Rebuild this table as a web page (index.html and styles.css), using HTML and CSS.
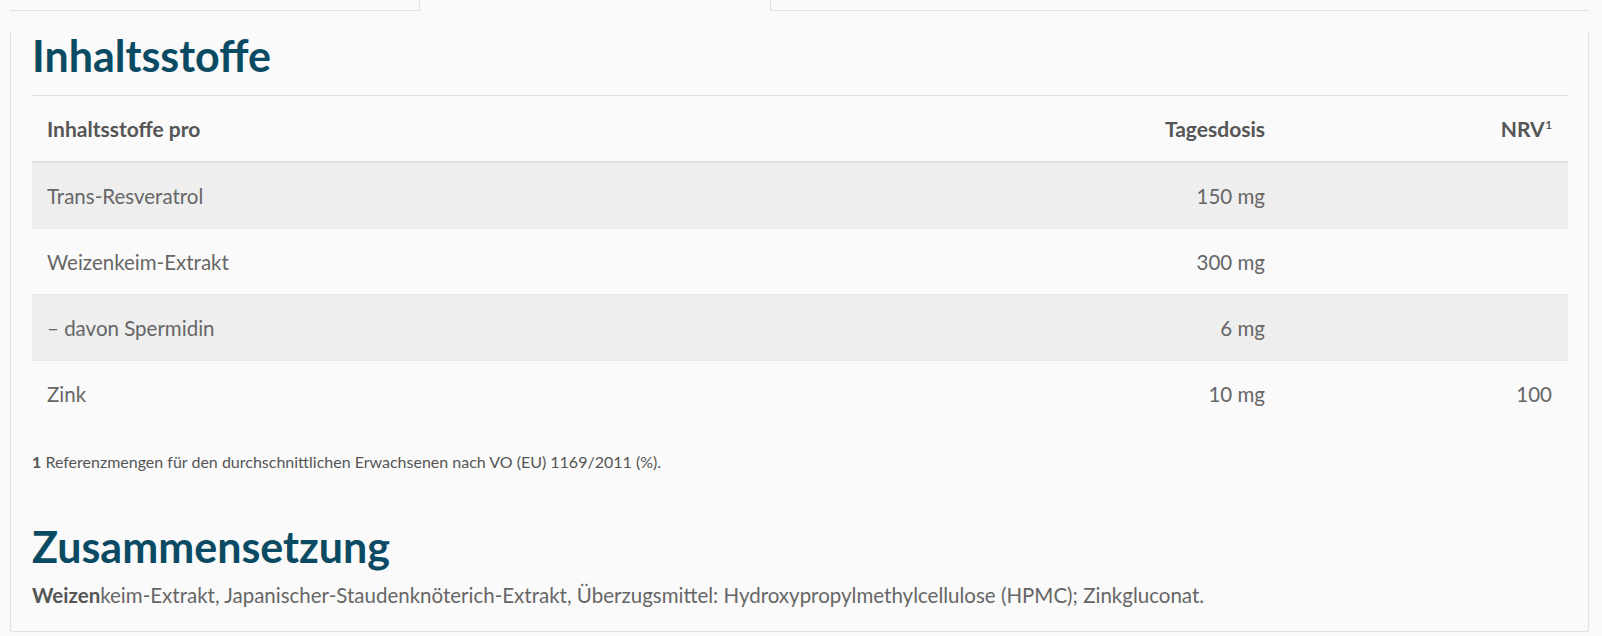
FILE: index.html
```html
<!DOCTYPE html>
<html lang="de">
<head>
<meta charset="utf-8">
<title>Inhaltsstoffe</title>
<link rel="stylesheet" href="styles.css">
</head>
<body>
<div class="wrap">
  <div class="tabs">
    <div class="tab tab-first"></div>
    <div class="tab tab-active"></div>
    <div class="tab tab-last"></div>
  </div>
  <div class="panel">
    <h2 class="title">Inhaltsstoffe</h2>
    <table class="nutri">
      <colgroup>
        <col class="c1">
        <col class="c2">
        <col class="c3">
      </colgroup>
      <thead>
        <tr>
          <th class="left">Inhaltsstoffe pro</th>
          <th class="right">Tagesdosis</th>
          <th class="right">NRV<sup>1</sup></th>
        </tr>
      </thead>
      <tbody>
        <tr class="odd">
          <td class="left">Trans-Resveratrol</td>
          <td class="right">150 mg</td>
          <td class="right"></td>
        </tr>
        <tr>
          <td class="left">Weizenkeim-Extrakt</td>
          <td class="right">300 mg</td>
          <td class="right"></td>
        </tr>
        <tr class="odd">
          <td class="left">– davon Spermidin</td>
          <td class="right">6 mg</td>
          <td class="right"></td>
        </tr>
        <tr>
          <td class="left">Zink</td>
          <td class="right">10 mg</td>
          <td class="right">100</td>
        </tr>
      </tbody>
    </table>
    <p class="footnote"><strong>1</strong> Referenzmengen für den durchschnittlichen Erwachsenen nach VO (EU) 1169/2011 (%).</p>
    <h2 class="title title-2">Zusammensetzung</h2>
    <p class="composition"><strong>Weizen</strong>keim-Extrakt, Japanischer-Staudenknöterich-Extrakt, Überzugsmittel: Hydroxypropylmethylcellulose (HPMC); Zinkgluconat.</p>
  </div>
</div>
</body>
</html>
```

FILE: styles.css
```css
html, body {
  margin: 0;
  padding: 0;
  background: #fafafa;
}

body {
  font-family: Lato, "Open Sans", sans-serif;
  color: #666;
}

.wrap {
  width: 1579px;
  margin-left: 10px;
}

.tabs {
  display: flex;
  height: 11px;
}

.tab {
  box-sizing: border-box;
  height: 11px;
}

.tab-first {
  width: 410px;
  border-bottom: 1px solid #e2e2e2;
  border-right: 1px solid #e2e2e2;
}

.tab-active {
  width: 351px;
  border-right: 1px solid #e2e2e2;
}

.tab-last {
  flex: 1;
  border-bottom: 1px solid #e2e2e2;
}

.panel {
  border: 1px solid #e2e2e2;
  border-top: none;
  padding: 0 20px 23px 21px;
  border-radius: 0 0 3px 3px;
}

.title {
  margin: 20px 0 14px;
  font-size: 43px;
  line-height: 50px;
  font-weight: 700;
  color: #0b4a63;
}

.nutri {
  width: 100%;
  border-collapse: collapse;
  font-size: 20.5px;
}

.c3 {
  width: 287px;
}

.c2 {
  width: 300px;
}

.nutri th,
.nutri td {
  padding: 0 16px 0 15px;
  height: 65px;
}

.nutri th {
  font-size: 21px;
  font-weight: 700;
  color: #555;
  border-top: 1px solid #e2e2e2;
  border-bottom: 2px solid #e2e2e2;
}

.nutri td {
  border-top: 1px solid #e8e8e8;
  font-weight: 400;
}

.nutri tr.odd td {
  background: #eeeeee;
}

.left {
  text-align: left;
}

.right {
  text-align: right;
}

.nutri sup {
  font-size: 11px;
  vertical-align: 8px;
  line-height: 0;
  margin-left: 1px;
}

.footnote {
  margin: 26px 0 0;
  font-size: 16px;
  line-height: 20px;
  color: #555;
}

.footnote strong {
  font-weight: 700;
}

.title-2 {
  margin: 50px 0 10px;
}

.composition {
  margin: 0;
  font-size: 20.5px;
  line-height: 26px;
  color: #666;
}

.composition strong {
  font-weight: 700;
  color: #555;
}
```
